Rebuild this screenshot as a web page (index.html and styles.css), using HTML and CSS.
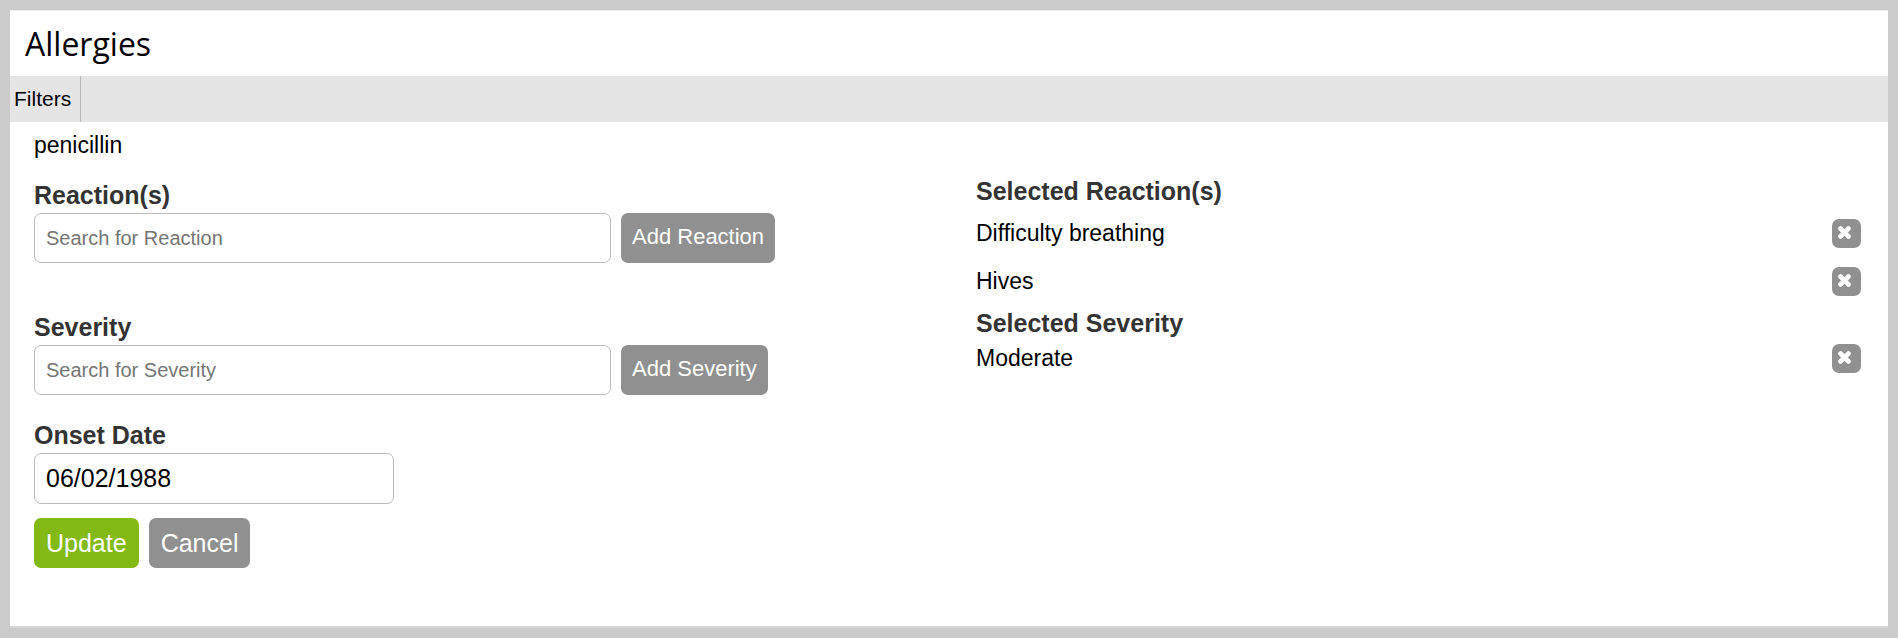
FILE: index.html
```html
<!DOCTYPE html>
<html lang="en">
<head>
  <meta charset="UTF-8" />
  <meta name="viewport" content="width=device-width, initial-scale=1.0"/>
  <title>Allergies</title>
  <link rel="stylesheet" href="styles.css">
</head>
<body>

<div class="panel">
  <h1 class="title">Allergies</h1>

  <div class="toolbar">
    <a href="#filters" class="filters">Filters</a>
  </div>

  <form class="allergy-form">
    <p class="allergen">penicillin</p>

    <div class="row">
      <div class="field">
        <label class="label" for="reaction">Reaction(s)</label>
        <div class="controls">
          <input type="text" class="input search" id="reaction" placeholder="Search for Reaction" />
          <button type="button" class="btn btn-add">Add Reaction</button>
        </div>
      </div>
      <div class="selected">
        <h2 class="label">Selected Reaction(s)</h2>
        <ul class="list">
          <li class="item">
            <span>Difficulty breathing</span>
            <button type="button" class="remove" aria-label="Remove Difficulty breathing">
              <svg viewBox="0 0 13 13" class="icon"><path d="M2.6 2.6l7.8 7.8M10.4 2.6l-7.8 7.8"/></svg>
            </button>
          </li>
          <li class="item">
            <span>Hives</span>
            <button type="button" class="remove" aria-label="Remove Hives">
              <svg viewBox="0 0 13 13" class="icon"><path d="M2.6 2.6l7.8 7.8M10.4 2.6l-7.8 7.8"/></svg>
            </button>
          </li>
        </ul>
      </div>
    </div>

    <div class="row">
      <div class="field">
        <label class="label" for="severity">Severity</label>
        <div class="controls">
          <input type="text" class="input search" id="severity" placeholder="Search for Severity" />
          <button type="button" class="btn btn-add">Add Severity</button>
        </div>
      </div>
      <div class="selected">
        <h2 class="label">Selected Severity</h2>
        <ul class="list compact">
          <li class="item">
            <span>Moderate</span>
            <button type="button" class="remove" aria-label="Remove Moderate">
              <svg viewBox="0 0 13 13" class="icon"><path d="M2.6 2.6l7.8 7.8M10.4 2.6l-7.8 7.8"/></svg>
            </button>
          </li>
        </ul>
      </div>
    </div>

    <div class="row">
      <div class="field last">
        <label class="label" for="onset">Onset Date</label>
        <div class="controls">
          <input type="text" class="input date" id="onset" value="06/02/1988" />
        </div>
      </div>
    </div>

    <div class="controls">
      <button type="submit" class="btn btn-update">Update</button>
      <button type="button" class="btn">Cancel</button>
    </div>
  </form>
</div>

</body>
</html>
```

FILE: styles.css
```css
* {
  box-sizing: border-box;
}

body {
  margin: 0;
  padding: 10px;
  background-color: #cbcbcb;
  font-family: "Liberation Sans", Arial, sans-serif;
  font-size: 23px;
  line-height: 26px;
  color: #000;
}

.panel {
  background-color: #fff;
  border-top: 1px solid #ececec;
  border-bottom: 2px solid #d6d6d6;
}

.title {
  margin: 0;
  padding: 11px 15px 10px;
  font-family: "Open Sans", sans-serif;
  font-size: 32px;
  font-weight: 400;
  line-height: 44px;
}

.toolbar {
  display: flex;
  background-color: #e5e5e5;
}

.filters {
  padding: 0 9px 0 4px;
  border-right: 1px solid #b9b9b9;
  font-size: 21px;
  line-height: 46px;
  color: #000;
  text-decoration: none;
}

.allergy-form {
  padding: 10px 27px 58px 24px;
}

.allergen {
  margin: 0 0 18px;
}

.row {
  display: grid;
  grid-template-columns: 1fr 1fr;
  column-gap: 57px;
}

.field {
  padding: 4px 0 21px;
}

.field.last {
  padding-bottom: 14px;
}

.label {
  display: block;
  margin: 0;
  font-size: 25px;
  font-weight: 700;
  line-height: 30px;
  color: #333;
}

.field .label {
  margin-bottom: 3px;
}

.controls {
  display: flex;
  gap: 10px;
}

.input {
  height: 50px;
  padding: 0 11px;
  border: 1px solid #bbb;
  border-radius: 7px;
  background-color: #fff;
  font-family: inherit;
  font-size: 25px;
  color: #000;
}

.input::placeholder {
  color: #757575;
}

.search {
  width: 577px;
  font-size: 20px;
}

.date {
  width: 360px;
  height: 51px;
}

.btn {
  height: 50px;
  padding: 0 12px;
  border: none;
  border-radius: 7px;
  background-color: #909090;
  font-family: inherit;
  font-size: 25px;
  color: #fff;
  cursor: pointer;
}

.btn-add {
  padding: 0 11px 3px;
  font-size: 22px;
}

.btn-update {
  background-color: #82b914;
}

.list {
  margin: 0;
  padding: 4px 0 2px;
  list-style: none;
}

.item {
  display: flex;
  justify-content: space-between;
  align-items: flex-start;
  padding: 9px 0 10px;
  line-height: 28px;
}

.compact {
  padding: 0;
}

.compact .item {
  padding: 6px 0;
}

.remove {
  display: flex;
  width: 29px;
  height: 29px;
  padding: 7px 6px;
  border: none;
  border-radius: 7px;
  background-color: #909090;
  cursor: pointer;
}

.icon {
  width: 13px;
  height: 13px;
  fill: none;
  stroke: #fff;
  stroke-width: 4.8;
  stroke-linecap: round;
}
```
